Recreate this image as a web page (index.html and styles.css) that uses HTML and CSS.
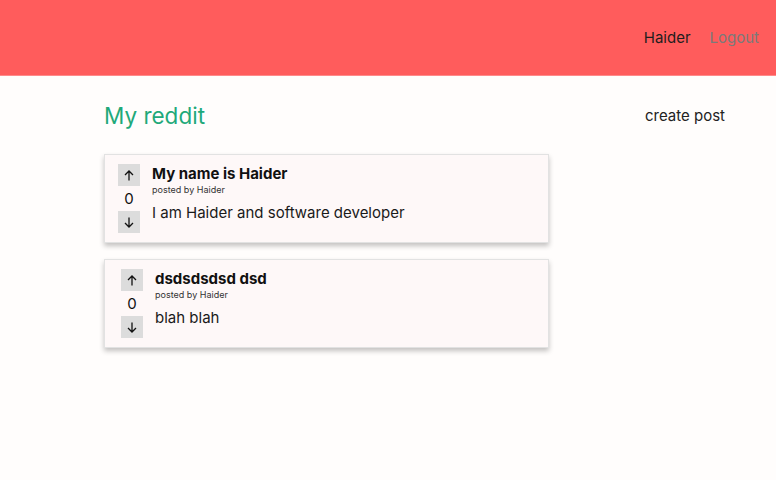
FILE: index.html
```html
<!DOCTYPE html>
<html>
<head>
<meta charset="utf-8">
<link rel="stylesheet" href="styles.css">
</head>
<body>
<header class="topbar">
  <span class="user">Haider</span>
  <span class="logout">Logout</span>
</header>
<main class="content">
  <div class="titlebar">
    <h1 class="brand">My reddit</h1>
    <span class="create">create post</span>
  </div>
  <div class="posts">
    <div class="card">
      <div class="votes">
        <button class="vote"><svg width="10" height="11" viewBox="0 0 10 11"><path d="M5 10.5V1M1 5l4-4 4 4" fill="none" stroke="#111" stroke-width="1.3"/></svg></button>
        <span class="count">0</span>
        <button class="vote"><svg width="10" height="11" viewBox="0 0 10 11"><path d="M5 0.5V10M1 6l4 4 4-4" fill="none" stroke="#111" stroke-width="1.3"/></svg></button>
      </div>
      <div class="body">
        <div class="title">My name is Haider</div>
        <div class="meta">posted by Haider</div>
        <div class="text">I am Haider and software developer</div>
      </div>
    </div>
    <div class="card card-shift">
      <div class="votes">
        <button class="vote"><svg width="10" height="11" viewBox="0 0 10 11"><path d="M5 10.5V1M1 5l4-4 4 4" fill="none" stroke="#111" stroke-width="1.3"/></svg></button>
        <span class="count">0</span>
        <button class="vote"><svg width="10" height="11" viewBox="0 0 10 11"><path d="M5 0.5V10M1 6l4 4 4-4" fill="none" stroke="#111" stroke-width="1.3"/></svg></button>
      </div>
      <div class="body">
        <div class="title">dsdsdsdsd dsd</div>
        <div class="meta">posted by Haider</div>
        <div class="text">blah blah</div>
      </div>
    </div>
  </div>
</main>
</body>
</html>
```
FILE: styles.css
```css
* { box-sizing: border-box; }
html, body { margin: 0; padding: 0; }
body {
  background: #fffdfc;
  font-family: Inter, "Noto Sans", sans-serif;
  color: #1a1a1a;
  min-height: 480px;
}
.topbar {
  height: 76px;
  background: #ff5c5c;
  border-bottom: 1px solid #ff8a8a;
  display: flex;
  align-items: center;
  justify-content: flex-end;
  gap: 19px;
  padding: 0 17px 0 0;
  font-size: 15px;
}
.user { color: #1e1e1e; }
.logout { color: #7a7a7a; }
.content {
  padding: 0 51px 40px 104px;
}
.titlebar {
  display: flex;
  justify-content: space-between;
  align-items: center;
  height: 78px;
}
.brand {
  margin: 0;
  font-weight: 400;
  font-size: 22.5px;
  color: #1fa97a;
}
.create {
  font-size: 15px;
  color: #222;
}
.posts {
  display: flex;
  flex-direction: column;
  gap: 16px;
}
.card {
  width: 445px;
  background: #fef8f8;
  border: 1px solid #e2e2e2;
  box-shadow: 0 3px 5px rgba(0,0,0,0.24);
  display: flex;
  padding: 9px 13px 9px 13px;
  gap: 12px;
}
.card-shift { padding-left: 16px; }
.votes {
  display: flex;
  flex-direction: column;
  align-items: center;
  width: 22px;
  gap: 2px;
}
.vote {
  width: 22px;
  height: 22px;
  border: none;
  background: #dcdcdc;
  padding: 0;
  display: flex;
  align-items: center;
  justify-content: center;
}
.vote svg { display: block; }
.count {
  font-size: 15px;
  line-height: 20px;
  margin-top: 1px;
  color: #111;
}
.body {
  display: flex;
  flex-direction: column;
}
.title {
  font-weight: 700;
  font-size: 15px;
  line-height: 20px;
  color: #111;
}
.meta {
  font-size: 9px;
  color: #333;
  line-height: 11px;
  margin-bottom: 8px;
}
.text {
  font-size: 15px;
  line-height: 20px;
  color: #1a1a1a;
}
```
